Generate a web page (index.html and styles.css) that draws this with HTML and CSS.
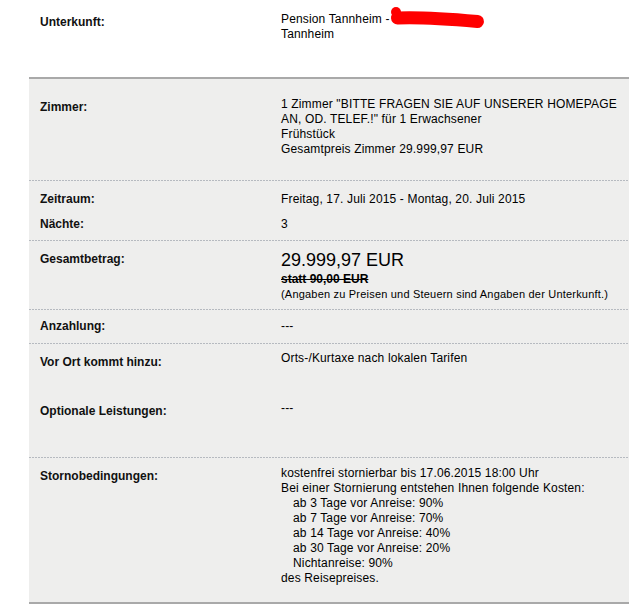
FILE: index.html
```html
<!DOCTYPE html>
<html lang="de">
<head>
<meta charset="utf-8">
<title>Buchungsdetails</title>
<link rel="stylesheet" href="styles.css">
</head>
<body>
<div class="booking">
  <div class="row top">
    <div class="label off3">Unterkunft:</div>
    <div class="value">Pension Tannheim -<span class="redact"><svg width="100" height="28" viewBox="0 0 100 28"><circle cx="7" cy="6" r="5" fill="#ff0000"/><path d="M8.5 12 C30 11 60 13 88.5 15.5" stroke="#ff0000" stroke-width="13" stroke-linecap="round" fill="none"/></svg></span><br>Tannheim</div>
  </div>
  <div class="panel">
    <div class="group g1">
      <div class="row">
        <div class="label off3">Zimmer:</div>
        <div class="value">1 Zimmer "BITTE FRAGEN SIE AUF UNSERER HOMEPAGE AN, OD. TELEF.!" für 1 Erwachsener<br>Frühstück<br>Gesamtpreis Zimmer 29.999,97 EUR</div>
      </div>
    </div>
    <div class="group g2">
      <div class="row">
        <div class="label">Zeitraum:</div>
        <div class="value">Freitag, 17. Juli 2015 - Montag, 20. Juli 2015</div>
      </div>
      <div class="row next">
        <div class="label">Nächte:</div>
        <div class="value">3</div>
      </div>
    </div>
    <div class="group g3">
      <div class="row">
        <div class="label off3">Gesamtbetrag:</div>
        <div class="value">
          <div class="price">29.999,97 EUR</div>
          <div class="old">statt 90,00 EUR</div>
          <div class="note">(Angaben zu Preisen und Steuern sind Angaben der Unterkunft.)</div>
        </div>
      </div>
    </div>
    <div class="group g4">
      <div class="row">
        <div class="label">Anzahlung:</div>
        <div class="value">---</div>
      </div>
    </div>
    <div class="group g5">
      <div class="row">
        <div class="label off4">Vor Ort kommt hinzu:</div>
        <div class="value">Orts-/Kurtaxe nach lokalen Tarifen</div>
      </div>
      <div class="row optional">
        <div class="label off3">Optionale Leistungen:</div>
        <div class="value">---</div>
      </div>
    </div>
    <div class="group g6">
      <div class="row">
        <div class="label off3">Stornobedingungen:</div>
        <div class="value">
          <div>kostenfrei stornierbar bis 17.06.2015 18:00 Uhr</div>
          <div>Bei einer Stornierung entstehen Ihnen folgende Kosten:</div>
          <div class="indent">ab 3 Tage vor Anreise: 90%</div>
          <div class="indent">ab 7 Tage vor Anreise: 70%</div>
          <div class="indent">ab 14 Tage vor Anreise: 40%</div>
          <div class="indent">ab 30 Tage vor Anreise: 20%</div>
          <div class="indent">Nichtanreise: 90%</div>
          <div>des Reisepreises.</div>
        </div>
      </div>
    </div>
  </div>
</div>
</body>
</html>
```

FILE: styles.css
```css
* { box-sizing: border-box; }

body {
  margin: 0;
  background: #ffffff;
  font-family: "Liberation Sans", Arial, sans-serif;
  font-size: 12px;
  line-height: 15px;
  color: #000000;
}

.booking {
  width: 600px;
  margin-left: 29px;
}

.row {
  display: grid;
  grid-template-columns: 241px 1fr;
  align-items: start;
  padding-left: 11px;
}

.label { font-weight: bold; color: #111111; }
.value { letter-spacing: 0.15px; }
.off3 { padding-top: 3px; }
.off4 { padding-top: 4px; }

.top {
  height: 77px;
  padding-top: 12px;
}

.redact {
  position: relative;
  display: inline-block;
  width: 0;
  height: 15px;
  vertical-align: top;
}

.redact svg {
  position: absolute;
  left: -1px;
  top: -6px;
}

.panel {
  background: #eeeeed;
  border-top: 2px solid #a9a9a9;
  border-bottom: 2px solid #a9a9a9;
}

.group + .group {
  background-image: repeating-linear-gradient(90deg, #b6bac0 0 2px, transparent 2px 3px);
  background-size: 100% 1px;
  background-repeat: no-repeat;
  background-position: top left;
}

.g1 { padding: 18px 0 23px; }
.g2 { padding: 12px 0 8px; }
.g2 .next { margin-top: 10px; }
.g3 { padding: 9px 0 7px; }
.g4 { padding: 10px 0 9px; }
.g5 { padding: 8px 0 38px; }
.g5 .optional { margin-top: 31px; }
.g6 { padding: 9px 0 16px; }

.price {
  font-size: 18px;
  line-height: 22px;
  letter-spacing: 0;
}

.old {
  margin-top: 1px;
  line-height: 15px;
  font-weight: bold;
  letter-spacing: 0;
  text-decoration: line-through;
}

.note {
  font-size: 11px;
  line-height: 15px;
  letter-spacing: 0.2px;
}

.indent { padding-left: 12px; }
```
